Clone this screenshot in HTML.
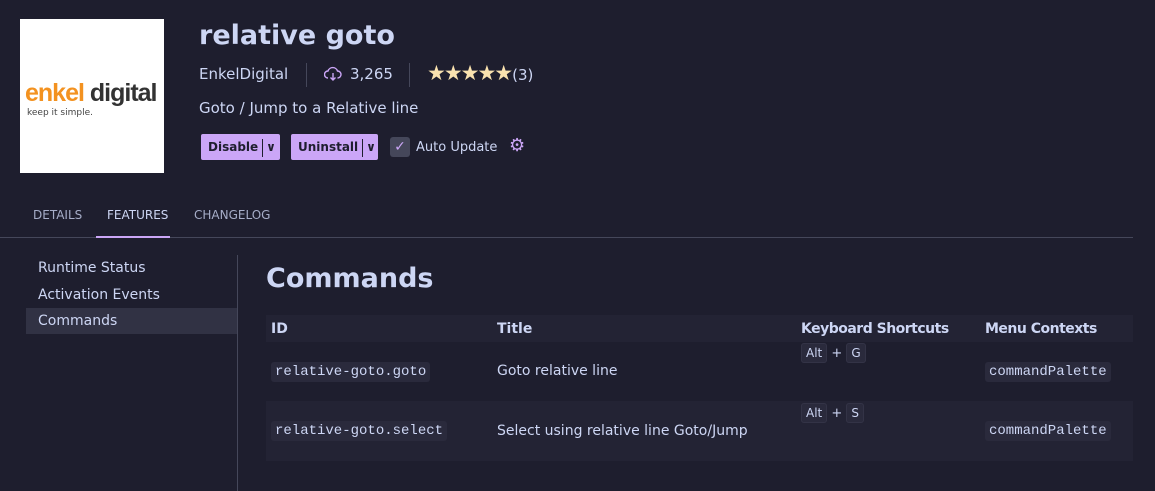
<!DOCTYPE html>
<html><head><style>
*{margin:0;padding:0;box-sizing:border-box}
body{width:1155px;height:491px;background:#1e1e2e;color:#cdd6f4;font-family:"DejaVu Sans","Liberation Sans",sans-serif;position:relative;overflow:hidden;font-size:13px}
.a{position:absolute;white-space:nowrap}
.logo{left:20px;top:19px;width:144px;height:154px;background:#fff;overflow:hidden}
.btn{background:#cba6f7;color:#1e1e2e;font-weight:bold;font-size:12px;height:26px;line-height:26px;border-radius:2px;padding-left:7px}
.btn span{display:inline-block;border-left:1px solid #1e1e2e;height:18px;vertical-align:middle;margin-left:4px;padding-left:3px;line-height:16px}
.code{font-family:"Liberation Mono",monospace;background:#2a2a3c;border-radius:3px;padding:2px 4px;font-size:14px}
.kb{background:#2a2a3c;border:1px solid #333346;border-radius:3px;font-size:12px;padding:2px 4px}
</style></head><body>
<div class="a logo"><div class="a" style="left:5px;top:60px;font-size:25px;font-weight:bold;letter-spacing:-1px;font-family:'Liberation Sans',sans-serif"><span style="color:#f39220">enkel</span> <span style="color:#333">digital</span></div><div class="a" style="left:7px;top:89px;font-size:9px;color:#444">keep it simple.</div></div>
<div class="a" style="left:199px;top:20px;font-size:27px;font-weight:bold">relative goto</div>
<div class="a" style="left:199px;top:65px;font-size:15px">EnkelDigital</div>
<div class="a" style="left:306px;top:63px;width:1px;height:24px;background:#45475a"></div>
<svg class="a" style="left:324px;top:66px" width="18" height="16" viewBox="0 0 18 16"><path d="M4 12a3.5 3.5 0 0 1 0-7 5 5 0 0 1 9.5 0 3.5 3.5 0 0 1 0 7M9 7v7M6.5 11.5 9 14l2.5-2.5" fill="none" stroke="#cba6f7" stroke-width="1.4"/></svg>
<div class="a" style="left:350px;top:65px;font-size:15px">3,265</div>
<div class="a" style="left:409px;top:63px;width:1px;height:24px;background:#45475a"></div>
<div class="a" style="left:427px;top:61px;font-size:21px;color:#f9e2af;letter-spacing:-2px">★★★★★<span style="color:#cdd6f4;font-size:15px;letter-spacing:0;margin-left:1px">(3)</span></div>
<div class="a" style="left:199px;top:99px;font-size:15px">Goto / Jump to a Relative line</div>
<div class="a btn" style="left:201px;top:134px;width:79px">Disable<span>∨</span></div>
<div class="a btn" style="left:291px;top:134px;width:87px">Uninstall<span>∨</span></div>
<div class="a" style="left:390px;top:137px;width:20px;height:20px;background:#45475a;border-radius:3px;color:#cba6f7;text-align:center;line-height:20px;font-size:14px">✓</div>
<div class="a" style="left:416px;top:140px;font-size:13px">Auto Update</div>
<div class="a" style="left:509px;top:135px;font-size:18px;color:#cba6f7">⚙</div>
<div class="a" style="left:33px;top:208px;font-size:12px;color:#a6adc8">DETAILS</div>
<div class="a" style="left:107px;top:208px;font-size:12px">FEATURES</div>
<div class="a" style="left:194px;top:208px;font-size:12px;color:#a6adc8">CHANGELOG</div>
<div class="a" style="left:0;top:237px;width:1133px;height:1px;background:#45475a"></div>
<div class="a" style="left:96px;top:236px;width:74px;height:2px;background:#cba6f7"></div>
<div class="a" style="left:26px;top:308px;width:211px;height:26px;background:#313244"></div>
<div class="a" style="left:38px;top:260px;font-size:14px">Runtime Status</div>
<div class="a" style="left:38px;top:287px;font-size:14px">Activation Events</div>
<div class="a" style="left:38px;top:313px;font-size:14px">Commands</div>
<div class="a" style="left:237px;top:255px;width:1px;height:236px;background:#45475a"></div>
<div class="a" style="left:266px;top:263px;font-size:27px;font-weight:bold">Commands</div>
<div class="a" style="left:266px;top:315px;width:867px;height:27px;background:#232334"></div>
<div class="a" style="left:266px;top:401px;width:867px;height:60px;background:#232334"></div>
<div class="a" style="left:271px;top:321px;font-weight:bold;font-size:14px">ID</div>
<div class="a" style="left:497px;top:321px;font-weight:bold;font-size:14px">Title</div>
<div class="a" style="left:801px;top:321px;font-weight:bold;font-size:14px;letter-spacing:-0.5px">Keyboard Shortcuts</div>
<div class="a" style="left:985px;top:321px;font-weight:bold;font-size:14px;letter-spacing:-0.5px">Menu Contexts</div>
<div class="a code" style="left:271px;top:362px">relative-goto.goto</div>
<div class="a" style="left:497px;top:363px;font-size:14px">Goto relative line</div>
<div class="a" style="left:801px;top:346px"><span class="kb">Alt</span> + <span class="kb">G</span></div>
<div class="a code" style="left:985px;top:362px">commandPalette</div>
<div class="a code" style="left:271px;top:421px">relative-goto.select</div>
<div class="a" style="left:497px;top:423px;font-size:14px">Select using relative line Goto/Jump</div>
<div class="a" style="left:801px;top:406px"><span class="kb">Alt</span> + <span class="kb">S</span></div>
<div class="a code" style="left:985px;top:421px">commandPalette</div>
</body></html>
